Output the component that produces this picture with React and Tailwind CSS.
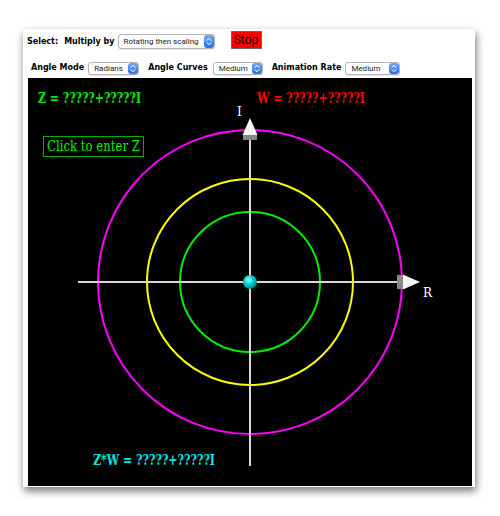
import React from 'react';

const labelFont = { fontFamily: '"DejaVu Sans", Verdana, sans-serif' };
const uiFont = { fontFamily: 'Roboto, "Noto Sans", Arial, sans-serif' };
const serif = '"DejaVu Serif", "Liberation Serif", serif';

const Stepper = () => (
    <div className="absolute right-0 top-0 bottom-0 w-[10px] rounded-[3px] bg-gradient-to-b from-[#6fa8f5] to-[#2b6fe0] flex flex-col items-center justify-center gap-[1px]">
        <svg width="6" height="3" viewBox="0 0 6 3"><path d="M0.5 2.7 L3 0.4 L5.5 2.7" fill="none" stroke="white" strokeWidth="1" /></svg>
        <svg width="6" height="3" viewBox="0 0 6 3"><path d="M0.5 0.3 L3 2.6 L5.5 0.3" fill="none" stroke="white" strokeWidth="1" /></svg>
    </div>
);

const FakeSelect = ({ value, width, tall }) => (
    <div
        className={`relative rounded-[3px] border border-[#b5b5b5] bg-white text-[8px] text-[#222] pl-[5px] shadow-[0_1px_1px_rgba(0,0,0,0.1)] ${tall ? 'h-[15px] leading-[13px]' : 'h-[13px] leading-[11px]'}`}
        style={{ width, ...uiFont }}
    >
        {value}
        <Stepper />
    </div>
);

const Label = ({ children, className = '' }) => (
    <span className={`text-[8px] font-bold text-black ${className}`} style={labelFont}>
        {children}
    </span>
);

const Plane = () => (
    <svg width="444" height="408" viewBox="0 0 444 408" className="block bg-black">
        <defs>
            <radialGradient id="ball" cx="0.4" cy="0.35" r="0.7">
                <stop offset="0" stopColor="#9ff" />
                <stop offset="0.5" stopColor="#0cc" />
                <stop offset="1" stopColor="#077" />
            </radialGradient>
        </defs>

        {/* readouts */}
        <text x="10" y="25" fill="#00ee00" fontFamily={serif} fontWeight="bold" fontSize="14" textLength="103" lengthAdjust="spacingAndGlyphs">Z = ?????+?????I</text>
        <text x="229" y="25" fill="#ff0000" fontFamily={serif} fontWeight="bold" fontSize="14" textLength="108" lengthAdjust="spacingAndGlyphs">W = ?????+?????I</text>

        <rect x="15.5" y="58.5" width="100" height="20" fill="none" stroke="#00b000" strokeWidth="1" />
        <text x="19" y="73" fill="#00ee00" fontFamily={serif} fontSize="14" textLength="93" lengthAdjust="spacingAndGlyphs">Click to enter Z</text>

        {/* circles */}
        <circle cx="222" cy="204" r="152" fill="none" stroke="#ff00ff" strokeWidth="2" />
        <circle cx="222" cy="204" r="103" fill="none" stroke="#ffff00" strokeWidth="2" />
        <circle cx="222" cy="204" r="70" fill="none" stroke="#00ee00" strokeWidth="2" />

        {/* axes */}
        <line x1="50" y1="204" x2="372" y2="204" stroke="#d8d8d8" strokeWidth="2" />
        <line x1="222" y1="60" x2="222" y2="388" stroke="#d8d8d8" strokeWidth="2" />
        <rect x="369" y="197" width="6" height="14" fill="#888" />
        <polygon points="375,196.5 392,204 375,211.5" fill="#f4f4f4" />
        <rect x="215" y="57" width="14" height="5" fill="#888" />
        <polygon points="214.5,57 222,40 229.5,57" fill="#f4f4f4" />

        <circle cx="222" cy="204" r="7" fill="url(#ball)" />

        <text x="209" y="38" fill="#fff" fontFamily={serif} fontSize="12">I</text>
        <text x="395" y="219" fill="#fff" fontFamily={serif} fontSize="12">R</text>

        <text x="65" y="387" fill="#00e5e5" fontFamily={serif} fontWeight="bold" fontSize="14" textLength="122" lengthAdjust="spacingAndGlyphs">Z*W = ?????+?????I</text>
    </svg>
);

export default function App() {
    return (
        <div className="w-[500px] h-[516px] bg-white pt-[29px] pl-[23px]">
            <div className="w-[452px] h-[458px] bg-white shadow-[1px_4px_8px_rgba(0,0,0,0.55)] flex flex-col">
                <div className="flex items-center h-[23px] pl-[4px] mt-[1px]">
                    <Label>Select:</Label>
                    <Label className="ml-[6px]">Multiply by</Label>
                    <div className="ml-[3px]"><FakeSelect value="Rotating then scaling" width={97} tall /></div>
                    <button
                        className="ml-[16px] w-[31px] h-[18px] bg-[#ff0000] border border-[#666] text-[12px] leading-[16px] text-black -mt-[3px]"
                        style={uiFont}
                    >
                        Stop
                    </button>
                </div>
                <div className="flex items-center h-[18px] pl-[8px] mt-[6px]">
                    <Label>Angle Mode</Label>
                    <div className="ml-[4px]"><FakeSelect value="Radians" width={51} /></div>
                    <Label className="ml-[9px]">Angle Curves</Label>
                    <div className="ml-[5px]"><FakeSelect value="Medium" width={50} /></div>
                    <Label className="ml-[9px]">Animation Rate</Label>
                    <div className="ml-[4px]"><FakeSelect value="Medium" width={55} /></div>
                </div>
                <div className="pl-[5px] pr-[3px] mt-[1px]">
                    <Plane />
                </div>
            </div>
        </div>
    );
}
